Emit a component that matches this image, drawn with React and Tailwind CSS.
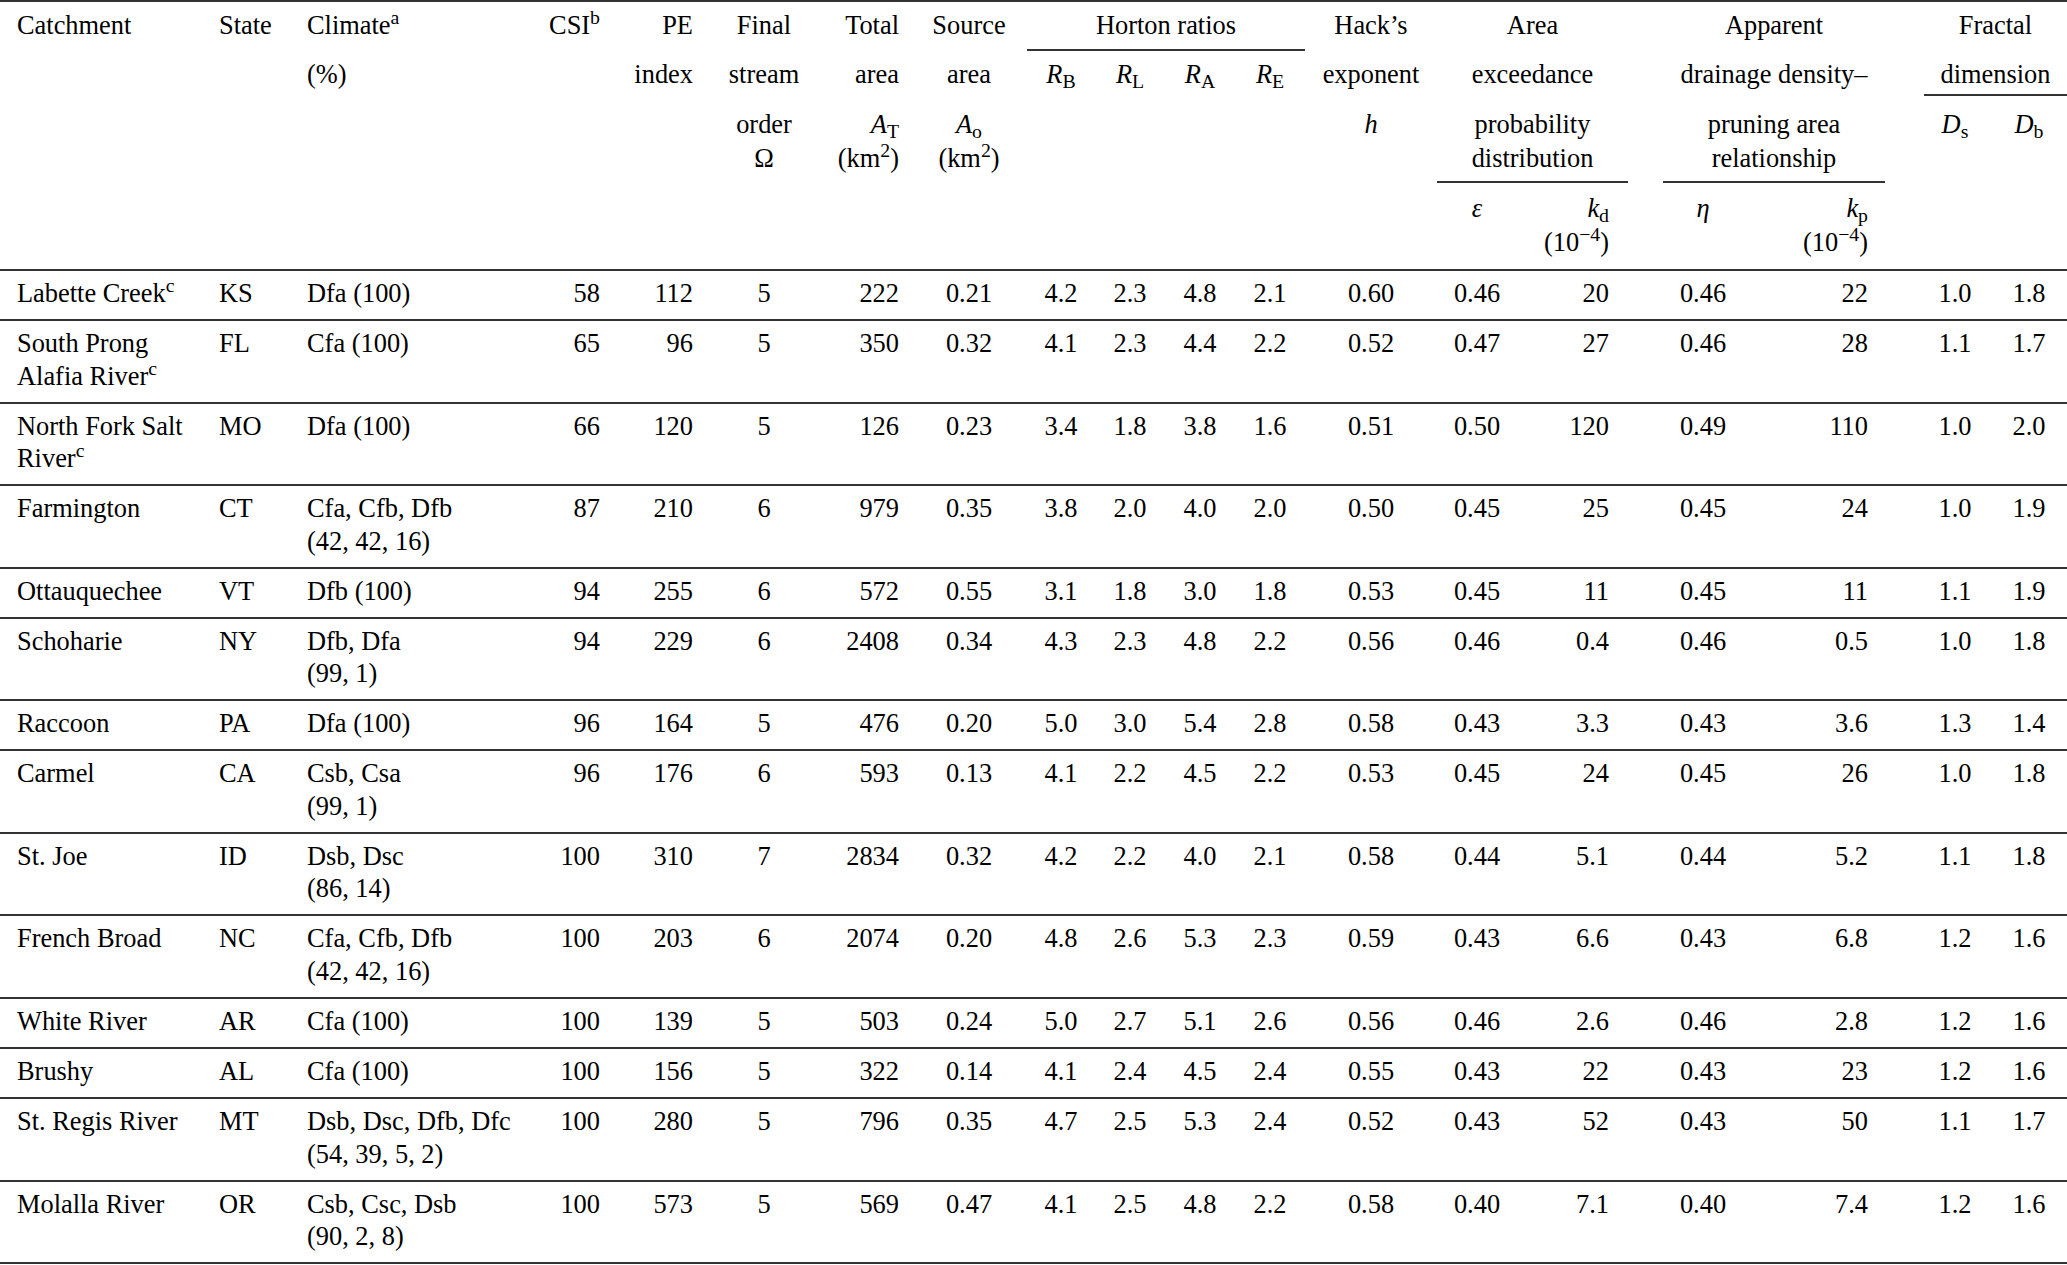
import React from "react";

const cols =
  "grid grid-cols-[205px_90px_225px_92px_93px_118px_88px_116px_68px_70px_70px_70px_132px_80px_126px_120px_156px_72px_76px]";

const colCls = [
  "pl-[17px] text-left",
  "pl-[14px] text-left",
  "pl-[12px] text-left",
  "pr-[12px] text-right",
  "pr-[12px] text-right",
  "text-center",
  "pr-[12px] text-right",
  "text-center",
  "text-center",
  "text-center",
  "text-center",
  "text-center",
  "text-center",
  "text-center",
  "pr-[34px] text-right",
  "text-center",
  "pr-[51px] text-right",
  "text-center",
  "text-center",
];

const rows = [
  [<>Labette Creek<sup>c</sup></>, "KS", "Dfa (100)", "58", "112", "5", "222", "0.21", "4.2", "2.3", "4.8", "2.1", "0.60", "0.46", "20", "0.46", "22", "1.0", "1.8"],
  [<>South Prong<br />Alafia River<sup>c</sup></>, "FL", "Cfa (100)", "65", "96", "5", "350", "0.32", "4.1", "2.3", "4.4", "2.2", "0.52", "0.47", "27", "0.46", "28", "1.1", "1.7"],
  [<>North Fork Salt<br />River<sup>c</sup></>, "MO", "Dfa (100)", "66", "120", "5", "126", "0.23", "3.4", "1.8", "3.8", "1.6", "0.51", "0.50", "120", "0.49", "110", "1.0", "2.0"],
  ["Farmington", "CT", <>Cfa, Cfb, Dfb<br />(42, 42, 16)</>, "87", "210", "6", "979", "0.35", "3.8", "2.0", "4.0", "2.0", "0.50", "0.45", "25", "0.45", "24", "1.0", "1.9"],
  ["Ottauquechee", "VT", "Dfb (100)", "94", "255", "6", "572", "0.55", "3.1", "1.8", "3.0", "1.8", "0.53", "0.45", "11", "0.45", "11", "1.1", "1.9"],
  ["Schoharie", "NY", <>Dfb, Dfa<br />(99, 1)</>, "94", "229", "6", "2408", "0.34", "4.3", "2.3", "4.8", "2.2", "0.56", "0.46", "0.4", "0.46", "0.5", "1.0", "1.8"],
  ["Raccoon", "PA", "Dfa (100)", "96", "164", "5", "476", "0.20", "5.0", "3.0", "5.4", "2.8", "0.58", "0.43", "3.3", "0.43", "3.6", "1.3", "1.4"],
  ["Carmel", "CA", <>Csb, Csa<br />(99, 1)</>, "96", "176", "6", "593", "0.13", "4.1", "2.2", "4.5", "2.2", "0.53", "0.45", "24", "0.45", "26", "1.0", "1.8"],
  ["St. Joe", "ID", <>Dsb, Dsc<br />(86, 14)</>, "100", "310", "7", "2834", "0.32", "4.2", "2.2", "4.0", "2.1", "0.58", "0.44", "5.1", "0.44", "5.2", "1.1", "1.8"],
  ["French Broad", "NC", <>Cfa, Cfb, Dfb<br />(42, 42, 16)</>, "100", "203", "6", "2074", "0.20", "4.8", "2.6", "5.3", "2.3", "0.59", "0.43", "6.6", "0.43", "6.8", "1.2", "1.6"],
  ["White River", "AR", "Cfa (100)", "100", "139", "5", "503", "0.24", "5.0", "2.7", "5.1", "2.6", "0.56", "0.46", "2.6", "0.46", "2.8", "1.2", "1.6"],
  ["Brushy", "AL", "Cfa (100)", "100", "156", "5", "322", "0.14", "4.1", "2.4", "4.5", "2.4", "0.55", "0.43", "22", "0.43", "23", "1.2", "1.6"],
  ["St. Regis River", "MT", <>Dsb, Dsc, Dfb, Dfc<br />(54, 39, 5, 2)</>, "100", "280", "5", "796", "0.35", "4.7", "2.5", "5.3", "2.4", "0.52", "0.43", "52", "0.43", "50", "1.1", "1.7"],
  ["Molalla River", "OR", <>Csb, Csc, Dsb<br />(90, 2, 8)</>, "100", "573", "5", "569", "0.47", "4.1", "2.5", "4.8", "2.2", "0.58", "0.40", "7.1", "0.40", "7.4", "1.2", "1.6"],
];

function Header() {
  return (
    <div className={`${cols} grid-rows-[49px_45px_87px_86px] border-t-2 border-[#333]`}>
      {/* row 1 */}
      <div className="col-start-1 row-start-1 pl-[17px] pt-[7px]">Catchment</div>
      <div className="col-start-2 row-start-1 pl-[14px] pt-[7px]">State</div>
      <div className="col-start-3 row-start-1 pl-[12px] pt-[7px]">Climate<sup>a</sup></div>
      <div className="col-start-4 row-start-1 pr-[12px] pt-[7px] text-right">CSI<sup>b</sup></div>
      <div className="col-start-5 row-start-1 pr-[12px] pt-[7px] text-right">PE</div>
      <div className="col-start-6 row-start-1 pt-[7px] text-center">Final</div>
      <div className="col-start-7 row-start-1 pr-[12px] pt-[7px] text-right">Total</div>
      <div className="col-start-8 row-start-1 pt-[7px] text-center">Source</div>
      <div className="col-start-9 col-span-4 row-start-1 pt-[7px] text-center border-b-2 border-[#333]">Horton ratios</div>
      <div className="col-start-13 row-start-1 pt-[7px] text-center">Hack’s</div>
      <div className="col-start-14 col-span-2 row-start-1 mr-[15px] pt-[7px] text-center">Area</div>
      <div className="col-start-16 col-span-2 row-start-1 ml-[20px] mr-[34px] pt-[7px] text-center">Apparent</div>
      <div className="col-start-18 col-span-2 row-start-1 ml-[5px] pt-[7px] text-center">Fractal</div>

      {/* row 2 */}
      <div className="col-start-3 row-start-2 pl-[12px] pt-[7px]">(%)</div>
      <div className="col-start-5 row-start-2 pr-[12px] pt-[7px] text-right">index</div>
      <div className="col-start-6 row-start-2 pt-[7px] text-center">stream</div>
      <div className="col-start-7 row-start-2 pr-[12px] pt-[7px] text-right">area</div>
      <div className="col-start-8 row-start-2 pt-[7px] text-center">area</div>
      <div className="col-start-9 row-start-2 pt-[7px] text-center"><i>R</i><sub>B</sub></div>
      <div className="col-start-10 row-start-2 pt-[7px] text-center"><i>R</i><sub>L</sub></div>
      <div className="col-start-11 row-start-2 pt-[7px] text-center"><i>R</i><sub>A</sub></div>
      <div className="col-start-12 row-start-2 pt-[7px] text-center"><i>R</i><sub>E</sub></div>
      <div className="col-start-13 row-start-2 pt-[7px] text-center">exponent</div>
      <div className="col-start-14 col-span-2 row-start-2 mr-[15px] pt-[7px] text-center">exceedance</div>
      <div className="col-start-16 col-span-2 row-start-2 ml-[20px] mr-[34px] pt-[7px] text-center whitespace-nowrap">drainage density–</div>
      <div className="col-start-18 col-span-2 row-start-2 ml-[5px] pt-[7px] text-center border-b-2 border-[#333]">dimension</div>

      {/* row 3 */}
      <div className="col-start-6 row-start-3 pt-[11px] leading-[34px] text-center">order<br />Ω</div>
      <div className="col-start-7 row-start-3 pr-[12px] pt-[11px] leading-[34px] text-right whitespace-nowrap"><i>A</i><sub>T</sub><br />(km<sup>2</sup>)</div>
      <div className="col-start-8 row-start-3 pt-[11px] leading-[34px] text-center whitespace-nowrap"><i>A</i><sub>o</sub><br />(km<sup>2</sup>)</div>
      <div className="col-start-13 row-start-3 pt-[11px] leading-[34px] text-center"><i>h</i></div>
      <div className="col-start-14 col-span-2 row-start-3 mr-[15px] pt-[11px] leading-[34px] text-center border-b-2 border-[#333]">probability<br />distribution</div>
      <div className="col-start-16 col-span-2 row-start-3 ml-[20px] mr-[34px] pt-[11px] leading-[34px] text-center border-b-2 border-[#333]">pruning area<br />relationship</div>
      <div className="col-start-18 row-start-3 pt-[11px] leading-[34px] text-center"><i>D</i><sub>s</sub></div>
      <div className="col-start-19 row-start-3 pt-[11px] leading-[34px] text-center"><i>D</i><sub>b</sub></div>

      {/* row 4 */}
      <div className="col-start-14 row-start-4 pt-[8px] leading-[34px] text-center"><i>ε</i></div>
      <div className="col-start-15 row-start-4 pr-[34px] pt-[8px] leading-[34px] text-right whitespace-nowrap"><i>k</i><sub>d</sub><br />(10<sup>−4</sup>)</div>
      <div className="col-start-16 row-start-4 pt-[8px] leading-[34px] text-center"><i>η</i></div>
      <div className="col-start-17 row-start-4 pr-[51px] pt-[8px] leading-[34px] text-right whitespace-nowrap"><i>k</i><sub>p</sub><br />(10<sup>−4</sup>)</div>
    </div>
  );
}

export default function App() {
  return (
    <div className="w-[2067px] min-h-[1265px] bg-white text-black text-[26.4px] leading-[33px] font-['Liberation_Serif','Times_New_Roman',serif]">
      <Header />
      <div>
        {rows.map((r, i) => (
          <div
            key={i}
            className={`${cols} border-t-2 border-[#333] pt-[6px] pb-[9.4px] leading-[32.6px] ${i === rows.length - 1 ? "border-b-2" : ""}`}
          >
            {r.map((c, j) => (
              <div key={j} className={`${colCls[j]} whitespace-nowrap`}>
                {c}
              </div>
            ))}
          </div>
        ))}
      </div>
    </div>
  );
}
